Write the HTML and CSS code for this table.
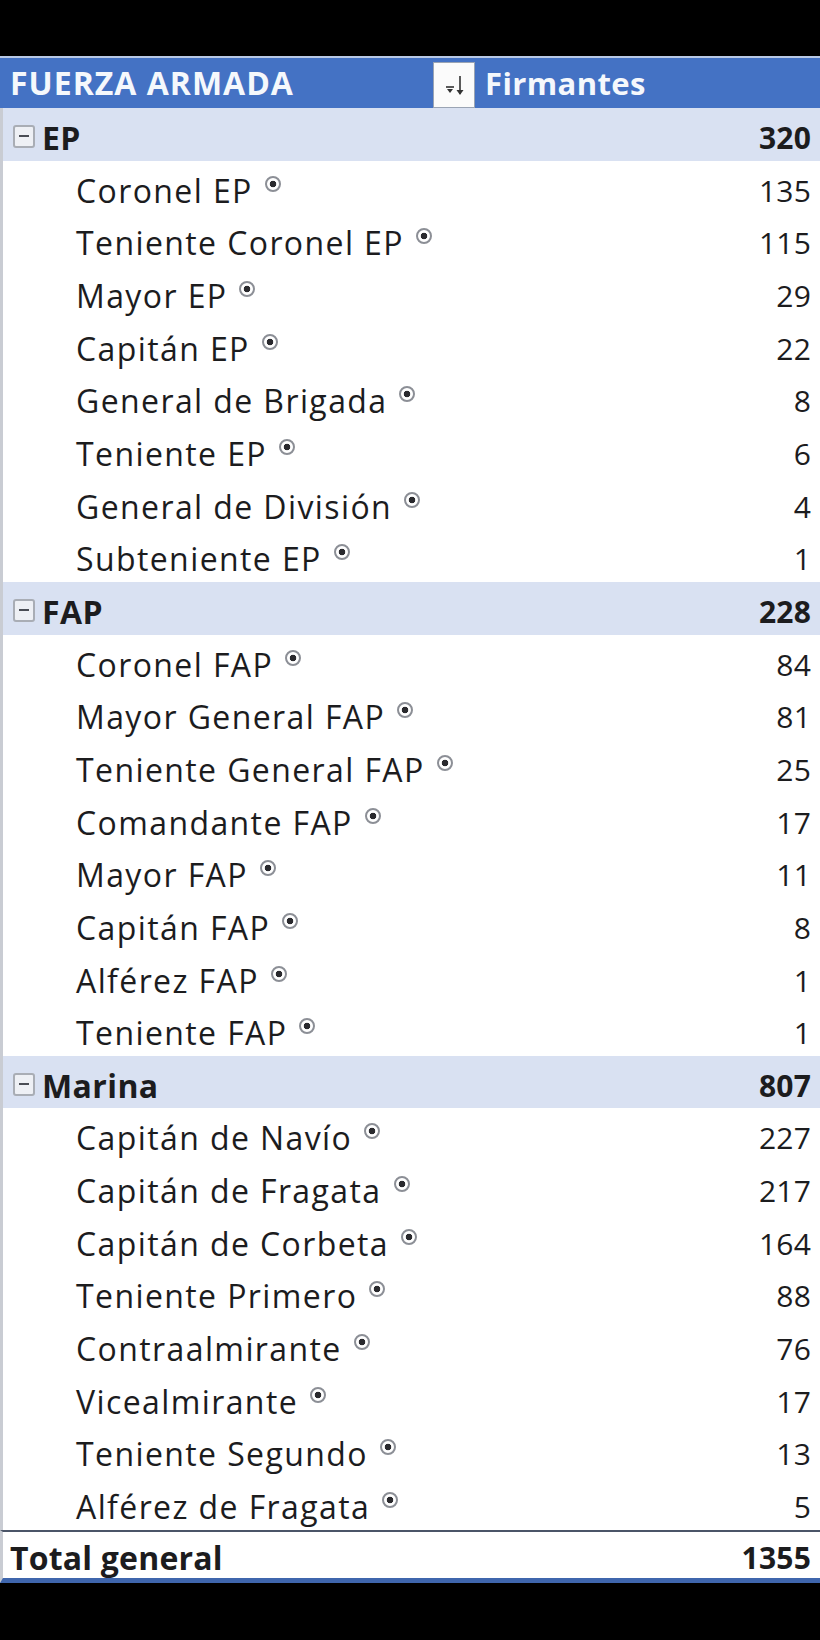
FILE: index.html
```html
<!DOCTYPE html>
<html lang="es">
<head>
    <meta charset="UTF-8">
    <meta name="viewport" content="width=device-width, initial-scale=1.0">
    <title>Firmantes por Fuerza Armada</title>
    <link rel="stylesheet" href="styles.css">
</head>
<body>
    <div class="pivot">
        <!-- Header -->
        <div class="pivot-head">
            <div class="head-label">FUERZA ARMADA</div>
            <div class="filter-btn">
                <svg width="42" height="46" viewBox="0 0 42 46">
                    <rect x="0.5" y="0.5" width="41" height="45" fill="#fbfbfb" stroke="#9aa4b4"/>
                    <line x1="13" y1="25" x2="21" y2="25" stroke="#333" stroke-width="1.6"/>
                    <path d="M14 27 L20 27 L17 31 Z" fill="#333"/>
                    <line x1="27" y1="14" x2="27" y2="32" stroke="#333" stroke-width="1.6"/>
                    <path d="M23.5 28 L30.5 28 L27 33 Z" fill="#333"/>
                </svg>
            </div>
            <div class="head-value">Firmantes</div>
        </div>

        <!-- EP -->
        <div class="row group"><span class="toggle"></span><span class="label">EP</span><span class="num">320</span></div>
        <div class="row item"><span class="label">Coronel EP</span><span class="num">135</span></div>
        <div class="row item"><span class="label">Teniente Coronel EP</span><span class="num">115</span></div>
        <div class="row item"><span class="label">Mayor EP</span><span class="num">29</span></div>
        <div class="row item"><span class="label">Capitán EP</span><span class="num">22</span></div>
        <div class="row item"><span class="label">General de Brigada</span><span class="num">8</span></div>
        <div class="row item"><span class="label">Teniente EP</span><span class="num">6</span></div>
        <div class="row item"><span class="label">General de División</span><span class="num">4</span></div>
        <div class="row item"><span class="label">Subteniente EP</span><span class="num">1</span></div>

        <!-- FAP -->
        <div class="row group"><span class="toggle"></span><span class="label">FAP</span><span class="num">228</span></div>
        <div class="row item"><span class="label">Coronel FAP</span><span class="num">84</span></div>
        <div class="row item"><span class="label">Mayor General FAP</span><span class="num">81</span></div>
        <div class="row item"><span class="label">Teniente General FAP</span><span class="num">25</span></div>
        <div class="row item"><span class="label">Comandante FAP</span><span class="num">17</span></div>
        <div class="row item"><span class="label">Mayor FAP</span><span class="num">11</span></div>
        <div class="row item"><span class="label">Capitán FAP</span><span class="num">8</span></div>
        <div class="row item"><span class="label">Alférez FAP</span><span class="num">1</span></div>
        <div class="row item"><span class="label">Teniente FAP</span><span class="num">1</span></div>

        <!-- Marina -->
        <div class="row group"><span class="toggle"></span><span class="label">Marina</span><span class="num">807</span></div>
        <div class="row item"><span class="label">Capitán de Navío</span><span class="num">227</span></div>
        <div class="row item"><span class="label">Capitán de Fragata</span><span class="num">217</span></div>
        <div class="row item"><span class="label">Capitán de Corbeta</span><span class="num">164</span></div>
        <div class="row item"><span class="label">Teniente Primero</span><span class="num">88</span></div>
        <div class="row item"><span class="label">Contraalmirante</span><span class="num">76</span></div>
        <div class="row item"><span class="label">Vicealmirante</span><span class="num">17</span></div>
        <div class="row item"><span class="label">Teniente Segundo</span><span class="num">13</span></div>
        <div class="row item"><span class="label">Alférez de Fragata</span><span class="num">5</span></div>

        <!-- Total -->
        <div class="row total"><span class="label">Total general</span><span class="num">1355</span></div>
    </div>
</body>
</html>
```

FILE: styles.css
```css
/* Global */
body {
    margin: 0;
    padding: 0;
    background: #000;
    font-family: 'Open Sans', 'Liberation Sans', sans-serif;
    color: #1c1c1e;
}

.pivot {
    margin-top: 56px;
    width: 820px;
}

/* Header */
.pivot-head {
    display: flex;
    align-items: flex-end;
    height: 52px;
    box-sizing: border-box;
    border-top: 2px solid #b9c9e6;
    background: #4472c4;
    color: #f5f8fc;
    font-size: 31px;
    font-weight: 700;
    letter-spacing: 0.4px;
}

.head-label {
    width: 423px;
    padding-left: 10px;
    font-size: 32px;
    letter-spacing: 1px;
    line-height: 44px;
    align-self: center;
}

.filter-btn {
    height: 46px;
}

.filter-btn svg {
    display: block;
}

.head-value {
    margin-left: 10px;
    line-height: 44px;
    align-self: center;
}

/* Rows */
.row {
    display: flex;
    align-items: flex-start;
    height: 52.667px;
    box-sizing: border-box;
    padding: 8px 9px 0 0;
    border-left: 3px solid #c9ccd3;
    background: #fff;
    line-height: 44px;
}

.label {
    flex: 1;
    font-size: 32px;
    letter-spacing: 1.4px;
    white-space: nowrap;
}

.num {
    font-size: 30px;
    letter-spacing: 0.2px;
}

/* Group rows */
.group {
    background: #d9e1f2;
    font-weight: 700;
}

.group .label {
    letter-spacing: 0.4px;
}

.toggle {
    position: relative;
    width: 22px;
    height: 23px;
    box-sizing: border-box;
    margin: 9px 7px 0 10px;
    border: 2px solid #a9adb5;
    border-radius: 3px;
    background: #eef0f5;
}

.toggle::before {
    content: "";
    position: absolute;
    left: 4px;
    top: 8px;
    width: 10px;
    height: 2px;
    background: #4a4d55;
}

/* Item rows */
.item .label {
    padding-left: 73px;
}

.item .label::after {
    content: "";
    display: inline-block;
    width: 16px;
    height: 16px;
    box-sizing: border-box;
    margin-left: 12px;
    vertical-align: 11px;
    border: 2px solid #8c8f96;
    border-radius: 50%;
    background: radial-gradient(circle, #2a2a2e 0 3px, #fff 3.6px);
}

/* Total row */
.total {
    height: 53px;
    padding-top: 4px;
    border-top: 2px solid #4b5568;
    border-bottom: 5px solid #3f66ad;
    font-weight: 700;
}

.total .label {
    padding-left: 7px;
    letter-spacing: 0.2px;
}
```
